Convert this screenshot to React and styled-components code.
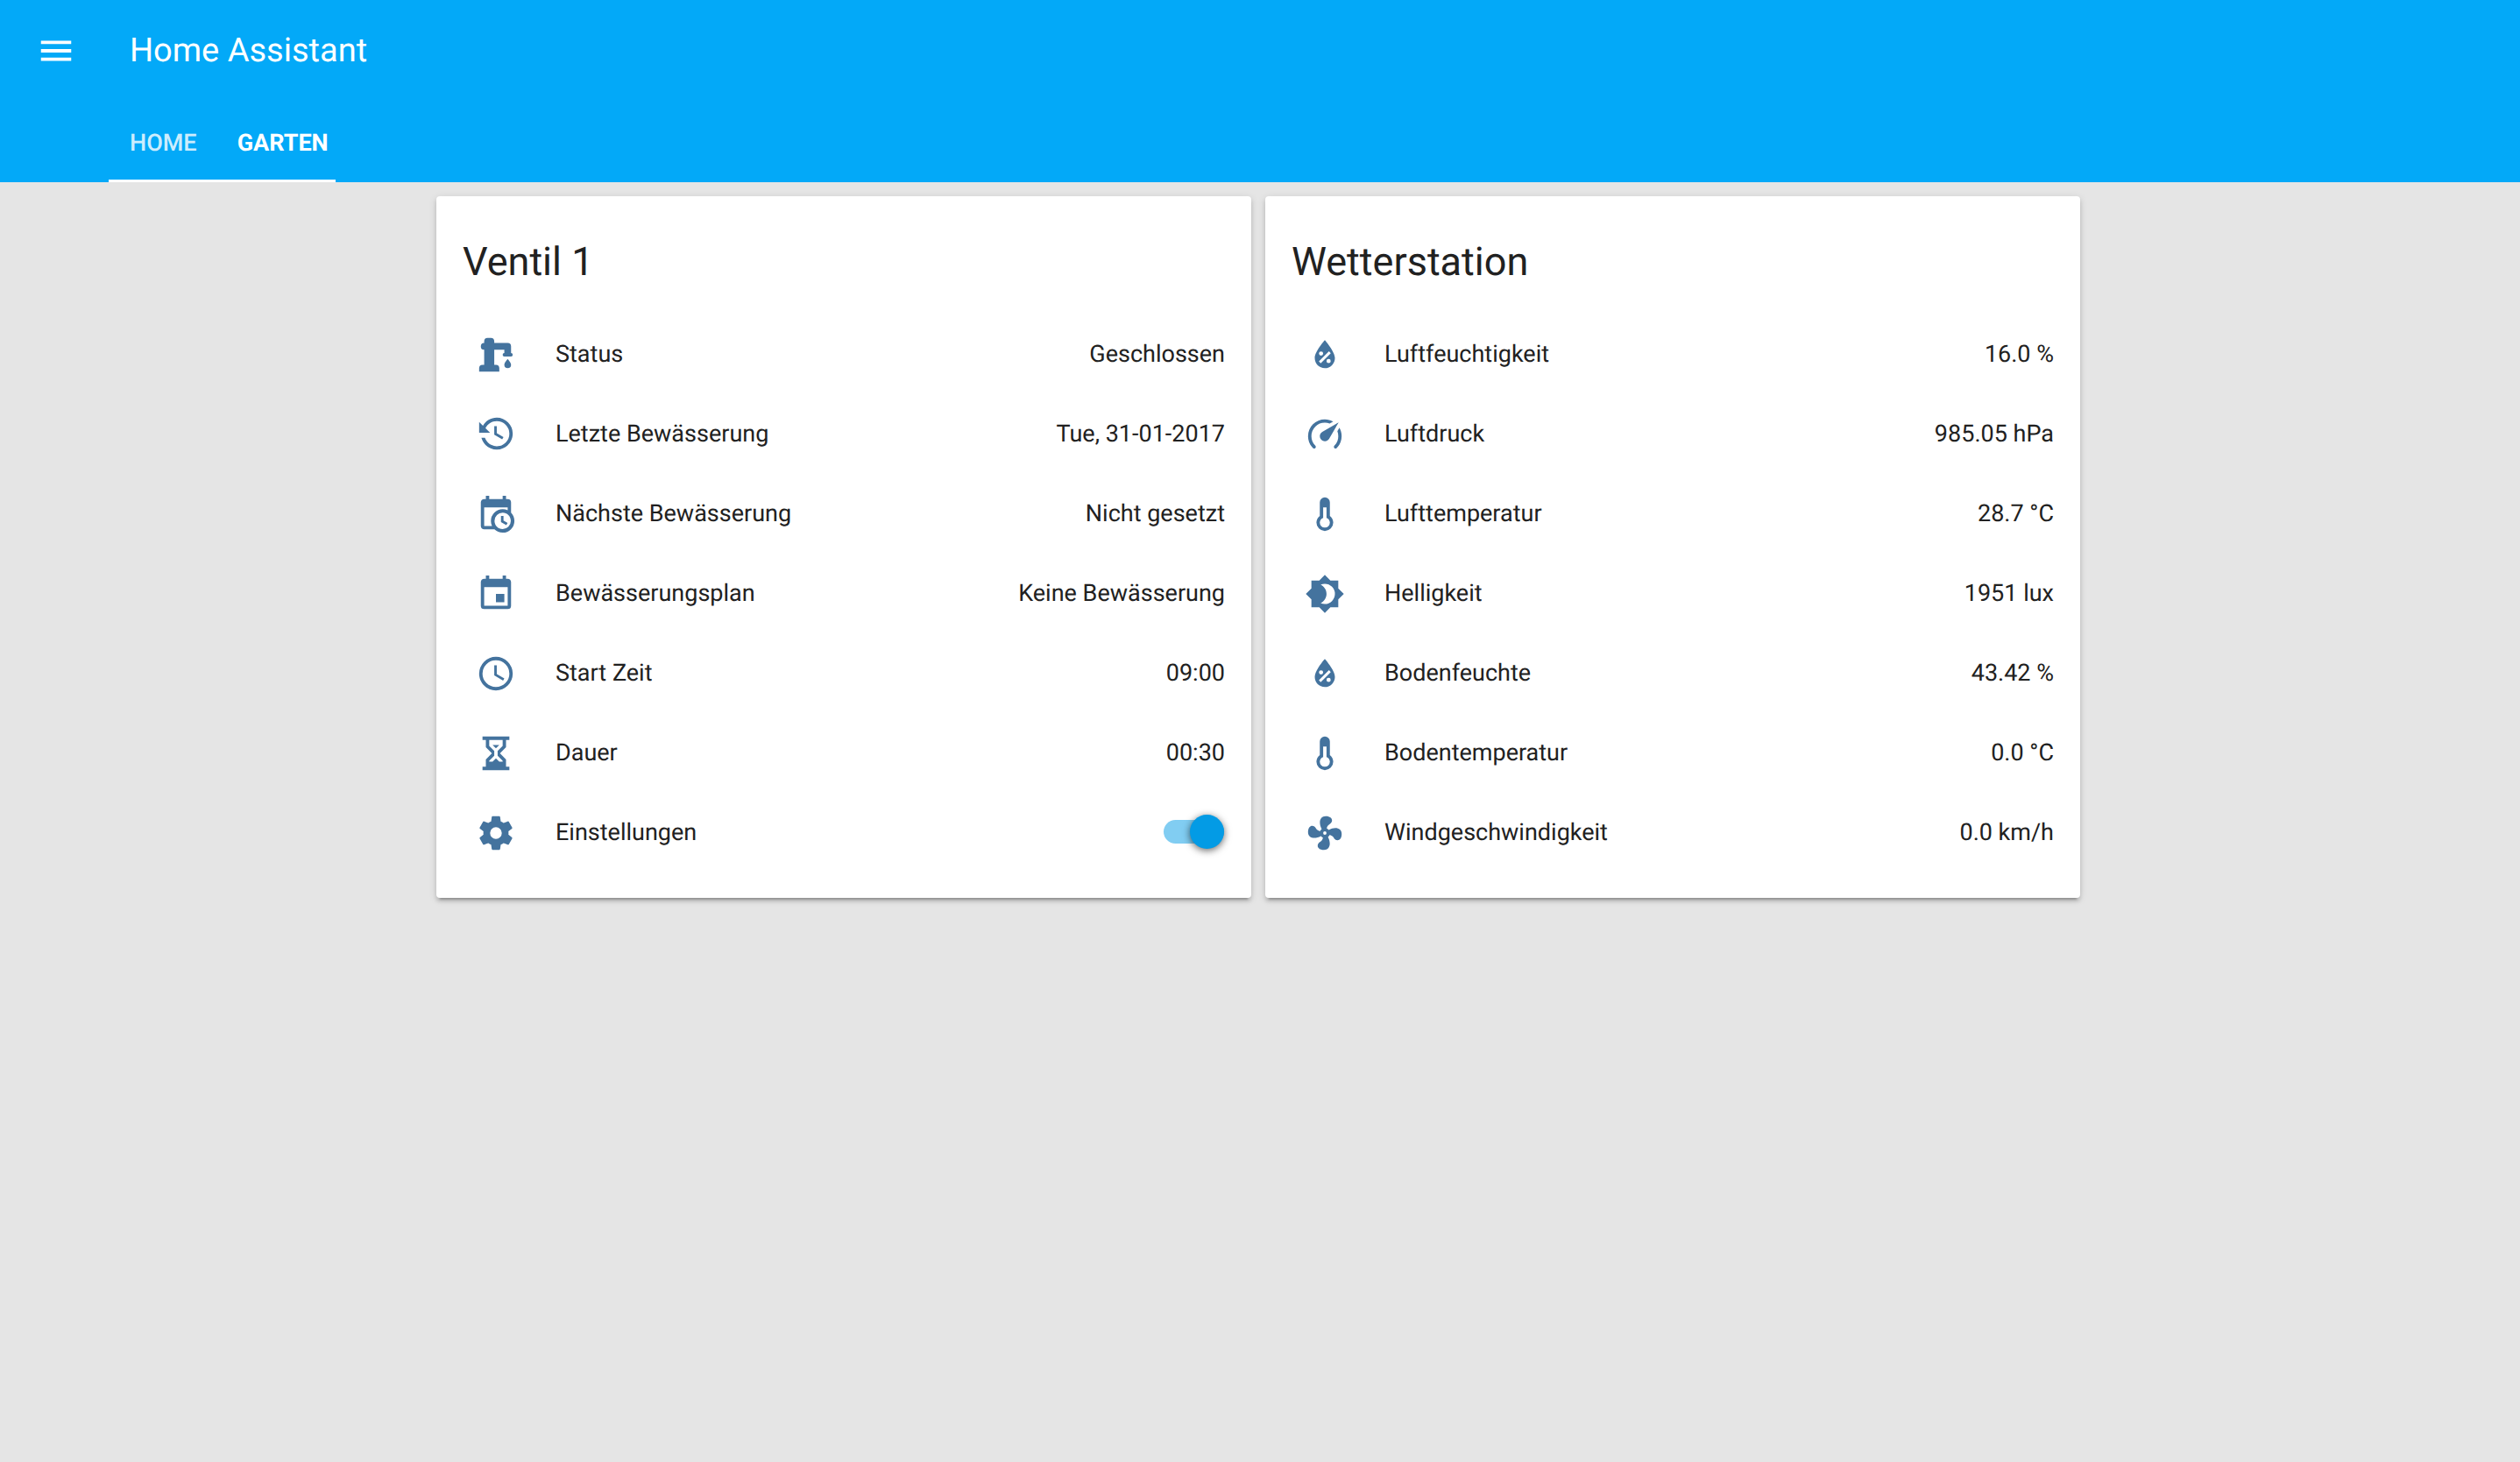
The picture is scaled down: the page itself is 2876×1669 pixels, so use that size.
import React, { useState } from "react";
import styled, { createGlobalStyle } from "styled-components";

const GlobalStyle = createGlobalStyle`
  *, *::before, *::after { box-sizing: border-box; }
  body {
    margin: 0;
    min-height: 100vh;
    background: #e5e5e5;
    color: #212121;
    font-family: Roboto, "Noto Sans", sans-serif;
    font-size: 27px;
    line-height: 38px;
    text-rendering: geometricPrecision;
  }
`;

const icons = {
  menu: "M3,6H21V8H3V6M3,11H21V13H3V11M3,16H21V18H3V16Z",
  pump: "M19,14.5C19,14.5 21,16.67 21,18A2,2 0 0,1 19,20A2,2 0 0,1 17,18C17,16.67 19,14.5 19,14.5M5,18V9A2,2 0 0,1 3,7A2,2 0 0,1 5,5V4A2,2 0 0,1 7,2H9A2,2 0 0,1 11,4V5H19A2,2 0 0,1 21,7V9L21,11A1,1 0 0,1 22,12A1,1 0 0,1 21,13H17A1,1 0 0,1 16,12A1,1 0 0,1 17,11V9H11V18H12A2,2 0 0,1 14,20V22H2V20A2,2 0 0,1 4,18H5Z",
  history: "M11,7V12.11L15.71,14.9L16.5,13.62L12.5,11.25V7M12.5,2C8.97,2 5.91,3.92 4.27,6.77L2,4.5V11H8.5L5.75,8.25C6.96,5.73 9.5,4 12.5,4A7.5,7.5 0 0,1 20,11.5A7.5,7.5 0 0,1 12.5,19C9.23,19 6.47,16.91 5.44,14H3.34C4.44,18.03 8.11,21 12.5,21C17.74,21 22,16.75 22,11.5A9.5,9.5 0 0,0 12.5,2Z",
  calendarClock: "M15,13H16.5V15.82L18.94,17.23L18.19,18.53L15,16.69V13M19,8H5V19H9.67C9.24,18.09 9,17.07 9,16A7,7 0 0,1 16,9C17.07,9 18.09,9.24 19,9.67V8M5,21C3.89,21 3,20.1 3,19V5C3,3.89 3.89,3 5,3H6V1H8V3H16V1H18V3H19A2,2 0 0,1 21,5V11.1C22.24,12.36 23,14.09 23,16A7,7 0 0,1 16,23C14.09,23 12.36,22.24 11.1,21H5M16,11.15A4.85,4.85 0 0,0 11.15,16C11.15,18.68 13.32,20.85 16,20.85A4.85,4.85 0 0,0 20.85,16C20.85,13.32 18.68,11.15 16,11.15Z",
  calendar: "M19,19H5V8H19M16,1V3H8V1H6V3H5C3.89,3 3,3.89 3,5V19A2,2 0 0,0 5,21H19A2,2 0 0,0 21,19V5C21,3.89 20.1,3 19,3H18V1M17,12H12V17H17V12Z",
  clock: "M12,20A8,8 0 0,0 20,12A8,8 0 0,0 12,4A8,8 0 0,0 4,12A8,8 0 0,0 12,20M12,2A10,10 0 0,1 22,12A10,10 0 0,1 12,22C6.47,22 2,17.5 2,12A10,10 0 0,1 12,2M12.5,7V12.25L17,14.92L16.25,16.15L11,13V7H12.5Z",
  sand: "M20,2V4H18V8.41L14.41,12L18,15.59V20H20V22H4V20H6V15.59L9.59,12L6,8.41V4H4V2H20M16,16.41L13,13.41V10.59L16,7.59V4H8V7.59L11,10.59V13.41L8,16.41V17H10L12,15L14,17H16V16.41M12,9L10,7H14L12,9Z",
  settings: "M12,15.5A3.5,3.5 0 0,1 8.5,12A3.5,3.5 0 0,1 12,8.5A3.5,3.5 0 0,1 15.5,12A3.5,3.5 0 0,1 12,15.5M19.43,12.97C19.47,12.65 19.5,12.33 19.5,12C19.5,11.67 19.47,11.34 19.43,11L21.54,9.37C21.73,9.22 21.78,8.95 21.66,8.73L19.66,5.27C19.54,5.05 19.27,4.96 19.05,5.05L16.56,6.05C16.04,5.66 15.5,5.32 14.87,5.07L14.5,2.42C14.46,2.18 14.25,2 14,2H10C9.75,2 9.54,2.18 9.5,2.42L9.13,5.07C8.5,5.32 7.96,5.66 7.44,6.05L4.95,5.05C4.73,4.96 4.46,5.05 4.34,5.27L2.34,8.73C2.21,8.95 2.27,9.22 2.46,9.37L4.57,11C4.53,11.34 4.5,11.67 4.5,12C4.5,12.33 4.53,12.65 4.57,12.97L2.46,14.63C2.27,14.78 2.21,15.05 2.34,15.27L4.34,18.73C4.46,18.95 4.73,19.03 4.95,18.95L7.44,17.94C7.96,18.34 8.5,18.68 9.13,18.93L9.5,21.58C9.54,21.82 9.75,22 10,22H14C14.25,22 14.46,21.82 14.5,21.58L14.87,18.93C15.5,18.67 16.04,18.34 16.56,17.94L19.05,18.95C19.27,19.03 19.54,18.95 19.66,18.73L21.66,15.27C21.78,15.05 21.73,14.78 21.54,14.63L19.43,12.97Z",
  humidity: "M12,3.25C12,3.25 6,10 6,14C6,17.32 8.69,20 12,20A6,6 0 0,0 18,14C18,10 12,3.25 12,3.25M14.47,9.97L15.53,11.03L9.53,17.03L8.47,15.97M9.75,10A1.25,1.25 0 0,1 11,11.25A1.25,1.25 0 0,1 9.75,12.5A1.25,1.25 0 0,1 8.5,11.25A1.25,1.25 0 0,1 9.75,10M14.25,14.5A1.25,1.25 0 0,1 15.5,15.75A1.25,1.25 0 0,1 14.25,17A1.25,1.25 0 0,1 13,15.75A1.25,1.25 0 0,1 14.25,14.5Z",
  gauge: "M12,16A3,3 0 0,1 9,13C9,11.88 9.61,10.9 10.5,10.39L20.21,4.77L14.68,14.35C14.18,15.33 13.17,16 12,16M12,3C13.81,3 15.5,3.5 16.97,4.32L14.87,5.53C14,5.19 13,5 12,5A8,8 0 0,0 4,13C4,15.21 4.89,17.21 6.34,18.65H6.35C6.74,19.04 6.74,19.67 6.35,20.06C5.96,20.45 5.32,20.45 4.93,20.07V20.07C3.12,18.26 2,15.76 2,13A10,10 0 0,1 12,3M22,13C22,15.76 20.88,18.26 19.07,20.07V20.07C18.68,20.45 18.05,20.45 17.66,20.06C17.27,19.67 17.27,19.04 17.66,18.65V18.65C19.11,17.2 20,15.21 20,13C20,12 19.81,11 19.46,10.1L20.67,8C21.5,9.5 22,11.18 22,13Z",
  thermometer: "M17,17A5,5 0 0,1 12,22A5,5 0 0,1 7,17C7,15.36 7.79,13.91 9,13V5A3,3 0 0,1 12,2A3,3 0 0,1 15,5V13C16.21,13.91 17,15.36 17,17M11,8V14.17C9.83,14.58 9,15.69 9,17A3,3 0 0,0 12,20A3,3 0 0,0 15,17C15,15.69 14.17,14.58 13,14.17V8H11Z",
  brightness: "M12,18C11.11,18 10.26,17.8 9.5,17.45C11.56,16.5 13,14.42 13,12C13,9.58 11.56,7.5 9.5,6.55C10.26,6.2 11.11,6 12,6A6,6 0 0,1 18,12A6,6 0 0,1 12,18M20,8.69V4H15.31L12,0.69L8.69,4H4V8.69L0.69,12L4,15.31V20H8.69L12,23.31L15.31,20H20V15.31L23.31,12L20,8.69Z",
  fan: "M12,11A1,1 0 0,0 11,12A1,1 0 0,0 12,13A1,1 0 0,0 13,12A1,1 0 0,0 12,11M12.5,2C17,2 17.11,5.57 14.75,6.75C13.76,7.24 13.32,8.29 13.13,9.22C13.61,9.42 14.03,9.73 14.35,10.13C18.05,8.13 22.03,8.92 22.03,12.5C22.03,17 18.46,17.1 17.28,14.73C16.78,13.74 15.72,13.3 14.79,13.11C14.59,13.59 14.28,14 13.88,14.34C15.87,18.03 15.08,22 11.5,22C7,22 6.91,18.42 9.27,17.24C10.25,16.75 10.69,15.71 10.89,14.79C10.4,14.59 9.97,14.27 9.65,13.87C5.96,15.85 2,15.07 2,11.5C2,7 5.56,6.89 6.74,9.26C7.24,10.25 8.29,10.68 9.22,10.87C9.41,10.39 9.73,9.97 10.14,9.65C8.15,5.96 8.94,2 12.5,2Z",
};

const Header = styled.header`
  background: #03a9f8;
  color: #fff;
`;

const Toolbar = styled.div`
  display: flex;
  align-items: center;
  gap: 61px;
  height: 116px;
  padding: 0 41px;
`;

const MenuButton = styled.button`
  display: flex;
  padding: 0;
  border: 0;
  background: none;
  color: inherit;
  cursor: pointer;
`;

const AppTitle = styled.h1`
  margin: 0;
  font-size: 38px;
  line-height: 38px;
  font-weight: 400;
`;

const Tabs = styled.nav`
  position: relative;
  display: flex;
  height: 92px;
  padding-left: 125px;
`;

const Tab = styled.button`
  padding: 2px 23px 0;
  border: 0;
  background: none;
  color: #fff;
  font: inherit;
  font-weight: ${(p) => (p.$active ? 700 : 500)};
  opacity: ${(p) => (p.$active ? 1 : 0.8)};
  text-rendering: inherit;
  text-transform: uppercase;
  cursor: pointer;
`;

const TabIndicator = styled.span`
  position: absolute;
  left: 124px;
  bottom: 0;
  width: 259px;
  height: 3px;
  background: #fff;
`;

const Cards = styled.main`
  display: grid;
  grid-template-columns: repeat(2, minmax(0, 930px));
  justify-content: center;
  align-items: start;
  gap: 16px;
  padding: 16px 20px 16px 16px;

  @media (max-width: 1100px) {
    grid-template-columns: minmax(0, 930px);
  }
`;

const Card = styled.section`
  padding: 48px 30px 30px;
  border-radius: 4px;
  background: #fff;
  box-shadow:
    0 4px 4px rgba(0, 0, 0, 0.14),
    0 2px 10px rgba(0, 0, 0, 0.12),
    0 6px 2px -4px rgba(0, 0, 0, 0.2);
`;

const CardTitle = styled.h2`
  margin: 0 0 32px;
  font-size: 45px;
  line-height: 54px;
  font-weight: 400;
`;

const Rows = styled.ul`
  margin: 0;
  padding: 0;
  list-style: none;
`;

const Row = styled.li`
  display: flex;
  align-items: center;
  height: 91px;
`;

const RowIcon = styled.span`
  display: flex;
  flex: none;
  width: 106px;
  padding: 3px 0 0 15px;
  color: #44739e;
`;

const RowLabel = styled.label`
  flex: 1;
  min-width: 0;
`;

const RowValue = styled.span`
  white-space: nowrap;
`;

const Switch = styled.input`
  appearance: none;
  position: relative;
  flex: none;
  width: 69px;
  height: 27px;
  margin: 0 1px 0 0;
  border-radius: 14px;
  background: ${(p) => (p.checked ? "#81cdf2" : "#9e9e9e")};
  cursor: pointer;

  &::before {
    content: "";
    position: absolute;
    top: -6px;
    left: ${(p) => (p.checked ? "30px" : "0")};
    width: 39px;
    height: 39px;
    border-radius: 50%;
    background: ${(p) => (p.checked ? "#039be5" : "#fafafa")};
    box-shadow: 0 2px 9px rgba(0, 0, 0, 0.6);
  }
`;

const IconSvg = styled.svg`
  display: block;
  width: 46px;
  height: 46px;
  fill: currentColor;
`;

function Icon({ name }) {
  return (
    <IconSvg viewBox="0 0 24 24" aria-hidden="true">
      <path d={icons[name]} />
    </IconSvg>
  );
}

const valve = [
  ["pump", "Status", "Geschlossen"],
  ["history", "Letzte Bewässerung", "Tue, 31-01-2017"],
  ["calendarClock", "Nächste Bewässerung", "Nicht gesetzt"],
  ["calendar", "Bewässerungsplan", "Keine Bewässerung"],
  ["clock", "Start Zeit", "09:00"],
  ["sand", "Dauer", "00:30"],
];

const weather = [
  ["humidity", "Luftfeuchtigkeit", "16.0 %"],
  ["gauge", "Luftdruck", "985.05 hPa"],
  ["thermometer", "Lufttemperatur", "28.7 °C"],
  ["brightness", "Helligkeit", "1951 lux"],
  ["humidity", "Bodenfeuchte", "43.42 %"],
  ["thermometer", "Bodentemperatur", "0.0 °C"],
  ["fan", "Windgeschwindigkeit", "0.0 km/h"],
];

function EntityRow({ icon, label, value }) {
  return (
    <Row>
      <RowIcon><Icon name={icon} /></RowIcon>
      <RowLabel as="span">{label}</RowLabel>
      <RowValue>{value}</RowValue>
    </Row>
  );
}

export default function App() {
  const [settings, setSettings] = useState(true);
  return (
    <>
      <GlobalStyle />
      <Header>
        <Toolbar>
          <MenuButton type="button" aria-label="Menü"><Icon name="menu" /></MenuButton>
          <AppTitle>Home Assistant</AppTitle>
        </Toolbar>
        <Tabs>
          <Tab type="button">Home</Tab>
          <Tab type="button" $active aria-current="page">Garten</Tab>
          <TabIndicator />
        </Tabs>
      </Header>
      <Cards>
        <Card>
          <CardTitle>Ventil 1</CardTitle>
          <Rows>
            {valve.map(([icon, label, value]) => (
              <EntityRow key={label} icon={icon} label={label} value={value} />
            ))}
            <Row>
              <RowIcon><Icon name="settings" /></RowIcon>
              <RowLabel htmlFor="einstellungen">Einstellungen</RowLabel>
              <Switch
                id="einstellungen"
                type="checkbox"
                role="switch"
                checked={settings}
                onChange={(e) => setSettings(e.target.checked)}
              />
            </Row>
          </Rows>
        </Card>
        <Card>
          <CardTitle>Wetterstation</CardTitle>
          <Rows>
            {weather.map(([icon, label, value]) => (
              <EntityRow key={label} icon={icon} label={label} value={value} />
            ))}
          </Rows>
        </Card>
      </Cards>
    </>
  );
}
